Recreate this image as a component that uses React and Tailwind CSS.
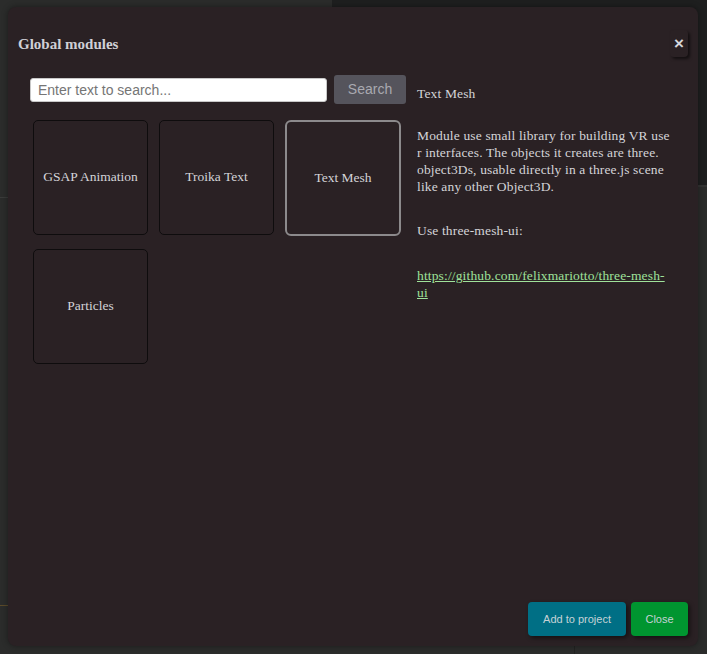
const MODULES = [
  { id: 'gsap', name: 'GSAP Animation' },
  { id: 'troika', name: 'Troika Text' },
  { id: 'mesh', name: 'Text Mesh' },
  { id: 'particles', name: 'Particles' }
]

const serif = "font-['Liberation_Serif','Times_New_Roman',serif]"
const sans = "font-['Liberation_Sans',Arial,sans-serif]"

export default function App() {
  const selected = 'mesh'

  return (
    <div className="relative h-[654px] w-full overflow-hidden bg-[#2b2c2b]">
      {/* page behind the dialog */}
      <div className="flex h-full">
        <div className="w-[332px]">
          <div className="h-[198px] border-b border-[#3a3b3a]" />
          <div className="h-[407px]" />
          <div className="h-px w-[10px] bg-[#5a4a2a]" />
        </div>
        <div className="flex flex-1 flex-col">
          <div className="h-[187px] border-b-2 border-[#333433] bg-[#1e1f1f]" />
          <div className="flex flex-1 justify-start">
            <div className="ml-[242px] h-full border-l border-[#222322]" />
          </div>
        </div>
      </div>

      {/* dialog */}
      <div className="absolute left-[8px] top-[7px] flex h-[639px] w-[690px] flex-col rounded-lg bg-[#2a2124] shadow-[0_0_6px_rgba(0,0,0,0.4)]">
        <div className="flex items-center justify-between px-[10px] pt-[23px]">
          <h2 className={`${serif} text-[15px] font-bold leading-[27px] text-[#d0d0d6] translate-y-px`}>
            Global modules
          </h2>
          <button className={`${sans} flex h-[27px] w-[18px] items-center justify-center rounded-sm text-[17px] font-bold text-[#d6d6dc] shadow-[2px_2px_3px_rgba(0,0,0,0.55)]`}>
            ×
          </button>
        </div>

        <div className="mt-[18px] flex pl-[22px]">
          <div className="w-[376px]">
            <div className="flex items-center gap-[7px]">
              <input
                type="text"
                placeholder="Enter text to search..."
                className={`${sans} h-[24px] w-[297px] rounded-[3px] border border-[#c8c8c8] bg-white px-[7px] text-[14px] text-[#333] placeholder:text-[#757575] outline-none`}
              />
              <button className={`${sans} h-[29px] w-[72px] rounded-[3px] bg-[#55545c] text-[14px] text-[#a9a9b0]`}>
                Search
              </button>
            </div>

            <div className="ml-[3px] mt-[16px] flex w-[370px] flex-wrap gap-x-[11px] gap-y-[13px]">
              {MODULES.map((m) => (
                <div
                  key={m.id}
                  className={
                    m.id === selected
                      ? `${serif} flex h-[116px] w-[116px] items-center justify-center rounded-[6px] border-2 border-[#8c8a8c] text-[13.5px] text-[#d4d4d8]`
                      : `${serif} flex h-[115px] w-[115px] items-center justify-center rounded-[5px] border border-[#0e0c0d] text-[13.5px] text-[#d4d4d8]`
                  }
                >
                  {m.name}
                </div>
              ))}
            </div>
          </div>

          <div className={`${serif} ml-[11px] w-[256px] pt-[10px] text-[13.5px] leading-[17px] tracking-[0.15px] text-[#d4d4d8]`}>
            <p>Text Mesh</p>
            {/* the description breaks mid-word, as in the module's own text box */}
            <p className="mt-[25px] break-all">
              Module use small library for building VR use<br />
              r interfaces. The objects it creates are three.<br />
              object3Ds, usable directly in a three.js scene<br />
              like any other Object3D.
            </p>
            <p className="mt-[27px]">Use three-mesh-ui:</p>
            <p className="mt-[28px] w-[250px]">
              <a href="#" className="text-[#9fe29a] underline">
                https://github.com/felixmariotto/three-mesh-ui
              </a>
            </p>
          </div>
        </div>

        <div className={`${sans} mt-auto flex justify-end gap-[5px] pb-[10px] pr-[10px] text-[11px] text-[#c6d2d6]`}>
          <button className="h-[34px] w-[98px] rounded-[4px] bg-[#006f85] shadow-[2px_2px_4px_rgba(0,0,0,0.5)]">
            Add to project
          </button>
          <button className="h-[34px] w-[57px] rounded-[4px] bg-[#009530] shadow-[2px_2px_4px_rgba(0,0,0,0.5)]">
            Close
          </button>
        </div>
      </div>
    </div>
  )
}
